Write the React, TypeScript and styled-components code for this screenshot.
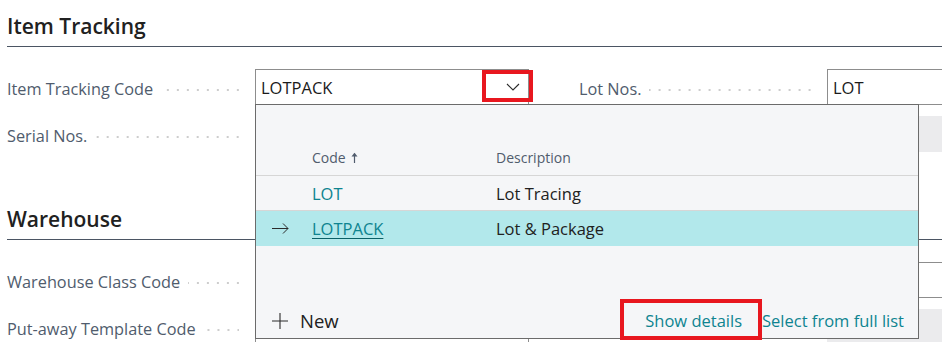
import React from "react";
import styled, { createGlobalStyle } from "styled-components";

const GlobalStyle = createGlobalStyle`
  html, body {
    margin: 0;
    padding: 0;
    background: #fff;
    overflow: hidden;
  }
  body {
    font-family: "Open Sans", "Noto Sans", sans-serif;
    color: #212121;
  }
`;

const annotationRed = "#e8171f";
const teal = "#0e8490";

const Page = styled.div`
  width: 942px;
  height: 342px;
  box-sizing: border-box;
  overflow: hidden;
  padding: 12px 0 0 7px;
`;

const Section = styled.section<{ $gap?: number }>`
  margin-top: ${(p) => p.$gap ?? 0}px;
`;

const Heading = styled.h2`
  margin: 0;
  font-size: 21px;
  font-weight: 600;
  line-height: 28px;
  padding-bottom: 6px;
  color: #212121;
  border-bottom: 1px solid #4b5563;
`;

const FieldGrid = styled.div`
  display: grid;
  grid-template-columns: 522px 522px;
  column-gap: 50px;
  row-gap: 11px;
  margin-top: 22px;
`;

const Field = styled.div`
  display: grid;
  grid-template-columns: 248px 274px;
  align-items: center;
`;

const LabelCell = styled.div`
  display: flex;
  align-items: center;
  padding: 3px 16px 0 0;
`;

const Label = styled.span`
  font-size: 16.3px;
  color: #505c6d;
  white-space: nowrap;
`;

const Leader = styled.span`
  flex: 1;
  height: 2px;
  margin: 3px 0 0 8px;
  background-image: linear-gradient(
    to right,
    transparent 8px,
    #cdcdcd 8px,
    #cdcdcd 10px
  );
  background-size: 10px 2px;
  background-position: right center;
  background-repeat: repeat-x;
`;

const InputBox = styled.div<{ $disabled?: boolean }>`
  position: relative;
  height: 36px;
  box-sizing: border-box;
  display: flex;
  align-items: center;
  padding-left: 5px;
  border: 1px solid ${(p) => (p.$disabled ? "transparent" : "#8d8d8d")};
  background: ${(p) => (p.$disabled ? "#ebebed" : "#fff")};
  font-size: 16.5px;
  color: #1b1b1b;
`;

const ChevronButton = styled.span`
  align-self: flex-start;
  margin-left: auto;
  margin-right: -5px;
  width: 51px;
  height: 32px;
  box-sizing: border-box;
  border: 4px solid ${annotationRed};
  display: flex;
  align-items: center;
  justify-content: flex-end;
  padding: 2px 9px 0 0;
`;

const Dropdown = styled.div`
  position: absolute;
  top: 100%;
  left: -1px;
  z-index: 10;
  width: 664px;
  height: 235px;
  box-sizing: border-box;
  display: flex;
  flex-direction: column;
  background: #f5f6f8;
  border: 1px solid #6b6b6b;
`;

const ListRow = styled.div<{ $head?: boolean; $selected?: boolean; $divider?: boolean }>`
  display: grid;
  grid-template-columns: 56px 184px 1fr;
  align-items: ${(p) => (p.$head ? "end" : "center")};
  box-sizing: border-box;
  height: ${(p) => (p.$head ? 71 : 35)}px;
  padding-bottom: ${(p) => (p.$head ? 8 : 0)}px;
  border-bottom: ${(p) => (p.$head || p.$divider ? "1px solid #d6d6d6" : "none")};
  background: ${(p) => (p.$selected ? "#b2e8eb" : "transparent")};
  font-size: ${(p) => (p.$head ? 14 : 16.5)}px;
  color: ${(p) => (p.$head ? "#505c6d" : "#212121")};
`;

const MarkCell = styled.span`
  display: flex;
  padding-left: 16px;
`;

const HeadCell = styled.span`
  display: flex;
  align-items: center;
  gap: 5px;
`;

const CodeLink = styled.span<{ $underline?: boolean }>`
  color: ${teal};
  text-decoration: ${(p) => (p.$underline ? "underline" : "none")};
  text-decoration-color: #0a5f66;
  text-underline-offset: 3px;
`;

const Footer = styled.div`
  margin-top: auto;
  height: 38px;
  box-sizing: border-box;
  display: flex;
  align-items: center;
  padding: 3px 14px 0 16px;
`;

const NewButton = styled.span`
  display: flex;
  align-items: center;
  gap: 12px;
  font-size: 18.5px;
  color: #212121;
`;

const FooterLinks = styled.div`
  margin-left: auto;
  display: flex;
  align-items: center;
`;

const FooterLink = styled.span<{ $marked?: boolean }>`
  font-size: 16.5px;
  color: ${teal};
  white-space: nowrap;
  ${(p) =>
    p.$marked
      ? `
    height: 41px;
    box-sizing: border-box;
    display: flex;
    align-items: center;
    margin-top: -2px;
    padding: 2px 16px 0 21px;
    border: 4px solid ${annotationRed};
  `
      : ""}
`;

const ChevronDown = () => (
  <svg width="14" height="8" viewBox="0 0 14 8" fill="none">
    <path d="M1 1l6 6 6-6" stroke="#2b2b2b" strokeWidth="1.1" />
  </svg>
);

const SortUp = () => (
  <svg width="7" height="11" viewBox="0 0 7 11" fill="none">
    <path d="M3.5 11V1.5" stroke="#505c6d" strokeWidth="1.2" />
    <path d="M0.5 4.5L3.5 0.8 6.5 4.5z" fill="#505c6d" />
  </svg>
);

const RowArrow = () => (
  <svg width="17" height="11" viewBox="0 0 17 11" fill="none">
    <path d="M0 5.5h16M11 0.5l5 5-5 5" stroke="#2b2b2b" strokeWidth="1" />
  </svg>
);

const PlusIcon = () => (
  <svg width="16" height="16" viewBox="0 0 16 16" fill="none">
    <path d="M8 0v16M0 8h16" stroke="#2b2b2b" strokeWidth="1.1" />
  </svg>
);

const FormField = ({
  label,
  children,
}: {
  label?: string;
  children: React.ReactNode;
}) => (
  <Field>
    <LabelCell>
      {label && <Label>{label}</Label>}
      {label && <Leader />}
    </LabelCell>
    {children}
  </Field>
);

const lookupRows = [
  { code: "LOT", description: "Lot Tracing" },
  { code: "LOTPACK", description: "Lot & Package", selected: true },
];

const TrackingLookup = () => (
  <Dropdown>
    <ListRow $head>
      <span />
      <HeadCell>
        Code <SortUp />
      </HeadCell>
      <span>Description</span>
    </ListRow>
    {lookupRows.map((row, i) => (
      <ListRow key={row.code} $selected={row.selected} $divider={i === 0}>
        <MarkCell>{row.selected && <RowArrow />}</MarkCell>
        <CodeLink $underline={row.selected}>{row.code}</CodeLink>
        <span>{row.description}</span>
      </ListRow>
    ))}
    <Footer>
      <NewButton>
        <PlusIcon />
        New
      </NewButton>
      <FooterLinks>
        <FooterLink $marked>Show details</FooterLink>
        <FooterLink>Select from full list</FooterLink>
      </FooterLinks>
    </Footer>
  </Dropdown>
);

export default function App() {
  return (
    <>
      <GlobalStyle />
      <Page>
        <Section>
          <Heading>Item Tracking</Heading>
          <FieldGrid>
            <FormField label="Item Tracking Code">
              <InputBox>
                LOTPACK
                <ChevronButton>
                  <ChevronDown />
                </ChevronButton>
                <TrackingLookup />
              </InputBox>
            </FormField>
            <FormField label="Lot Nos.">
              <InputBox>LOT</InputBox>
            </FormField>
            <FormField label="Serial Nos.">
              <InputBox />
            </FormField>
            <FormField>
              <InputBox $disabled />
            </FormField>
          </FieldGrid>
        </Section>
        <Section $gap={53}>
          <Heading>Warehouse</Heading>
          <FieldGrid>
            <FormField label="Warehouse Class Code">
              <InputBox />
            </FormField>
            <FormField>
              <InputBox />
            </FormField>
            <FormField label="Put-away Template Code">
              <InputBox />
            </FormField>
            <FormField>
              <InputBox $disabled />
            </FormField>
          </FieldGrid>
        </Section>
      </Page>
    </>
  );
}
